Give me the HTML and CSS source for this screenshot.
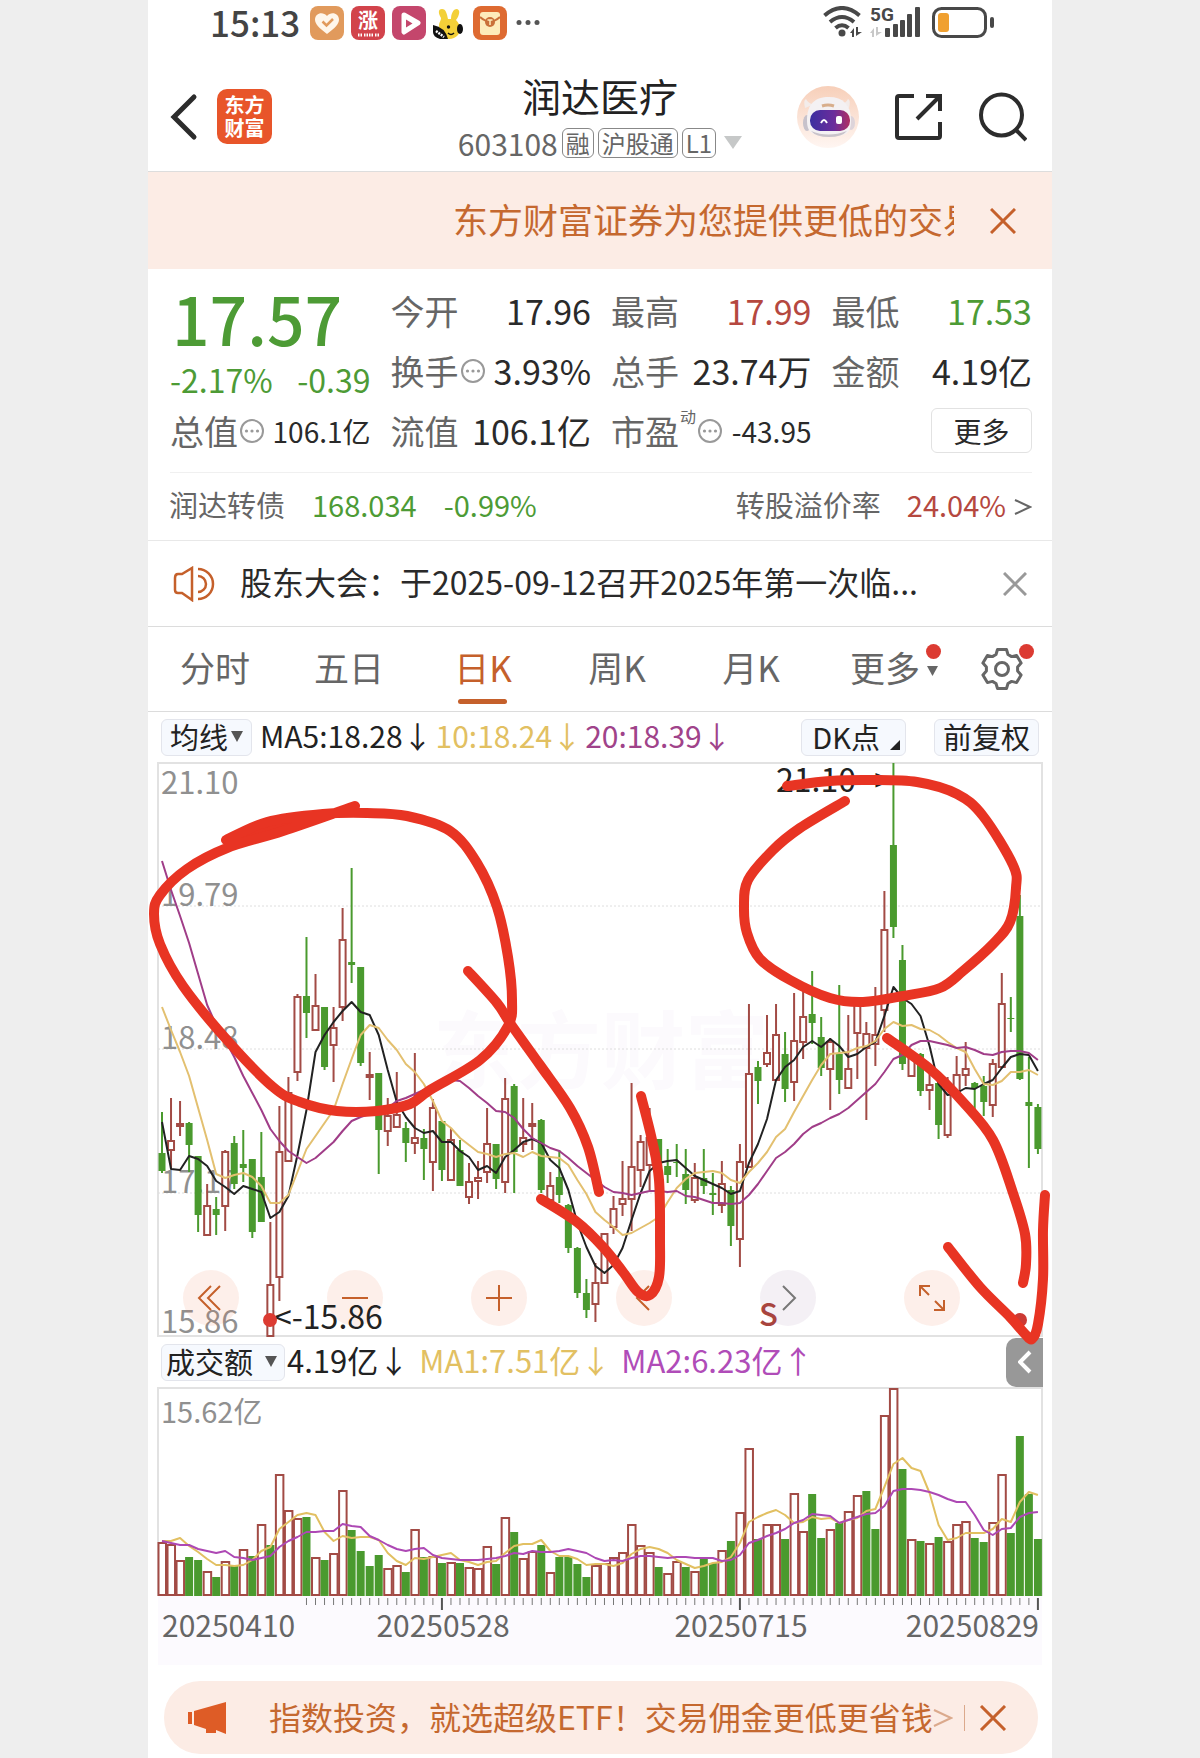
FILE: index.html
```html
<!DOCTYPE html>
<html lang="zh-CN">
<head>
<meta charset="utf-8">
<meta name="viewport" content="width=device-width, initial-scale=1">
<title>润达医疗 603108</title>
<link rel="stylesheet" href="styles.css">
</head>
<body>
<main class="phone">

  <div class="status">
    <span class="clock">15:13</span>
    <div class="apps">
      <svg width="34" height="34" viewBox="0 0 34 34" aria-hidden="true"><rect width="34" height="34" rx="8" fill="#e19a5c"/><path d="M17 28C9 22 5 18 5 13.500C5 7 13 5 17 10C21 5 29 7 29 13.500C29 18 25 22 17 28Z" fill="#fff6ea"/><path d="M12.500 15.500l4 4 6.500-6.500" fill="none" stroke="#e19a5c" stroke-width="2.500"/></svg>
      <svg width="34" height="34" viewBox="0 0 34 34" aria-hidden="true"><rect width="34" height="34" rx="8" fill="#d2434b"/><text x="17" y="22" class="app-char">涨</text><path d="M7 29h4M13 29h4M18 29h4M24 29h4" stroke="#fff" stroke-width="3" stroke-dasharray="1.500 1"/></svg>
      <svg width="34" height="34" viewBox="0 0 34 34" aria-hidden="true"><rect width="34" height="34" rx="8" fill="#c4466c"/><path d="M12 9L26 17L12 26Z" fill="#fff" stroke="#fff" stroke-width="5" stroke-linejoin="round"/><path d="M14 13.500l6.500 4-6.500 4Z" fill="#c4466c"/></svg>
      <svg width="32" height="34" viewBox="0 0 32 34" aria-hidden="true"><path d="M6 20C6 16 8 15 8 12C5 7 5 3 9 3C13 3 14 8 15 13L18 13C18 8 20 3 24 3C28 4 26 10 23 14C27 18 29 24 25 29C20 35 10 34 7 28Z" fill="#f3d038"/><path d="M0 19Q12 21 15 33H7Q0 31 0 26Z" fill="#111"/><ellipse cx="27" cy="23" rx="3" ry="5" fill="#111"/><circle cx="15.500" cy="21" r="1.700" fill="#111"/><path d="M15 27q3 3 6 0" fill="none" stroke="#111" stroke-width="1.500"/><path d="M3 25l8 6" stroke="#fff" stroke-width="2.500" stroke-dasharray="2 1"/></svg>
      <svg width="36" height="34" viewBox="0 0 36 34" aria-hidden="true"><rect x="1" width="34" height="34" rx="8" fill="#de6a31"/><rect x="8" y="6" width="20" height="23" rx="3" fill="#fdebbb"/><path d="M8 11q10 9 20 0" fill="none" stroke="#c9703a" stroke-width="2"/><circle cx="18" cy="16" r="5" fill="#c9703a"/><path d="M15.500 14h5M18 14v5" stroke="#fdebbb" stroke-width="1.500"/></svg>
      <svg width="26" height="34" viewBox="0 0 26 34" aria-hidden="true"><g fill="#555"><circle cx="4" cy="16.500" r="2.500"/><circle cx="13" cy="16.500" r="2.500"/><circle cx="22" cy="16.500" r="2.500"/></g></svg>
    </div>
    <svg class="signals" width="173" height="34" viewBox="0 0 173 34" aria-label="5G">
      <g fill="none" stroke="#484848" stroke-width="4"><path d="M1.500 9.500Q19 -5.500 36.500 9.500"/><path d="M7 16Q19 6 31 16"/><path d="M12.500 22Q19 16.500 25.500 22"/></g>
      <circle cx="19" cy="27" r="3.500" fill="#484848"/>
      <path d="M27 27l4-5v9h-2v-4zM33 21v9l6-4h-4v-5z" fill="#484848"/>
      <text x="47" y="15" class="net">5G</text>
      <path d="M47 27l4-5v9h-2v-4zM53 21v9l6-4h-4v-5z" fill="#c8c8c8"/>
      <g fill="#484848"><rect x="62" y="22" width="5" height="9" rx="1"/><rect x="70" y="18" width="5" height="13" rx="1"/><rect x="77" y="14" width="5" height="17" rx="1"/><rect x="84" y="8" width="5" height="23" rx="1"/><rect x="92" y="1" width="5" height="30" rx="1"/></g>
      <rect x="110.500" y="2.500" width="52" height="28" rx="8" fill="none" stroke="#484848" stroke-width="3"/>
      <rect x="115" y="7" width="11" height="19" rx="3" fill="#f0a030"/>
      <rect x="167" y="11" width="4" height="11" rx="2" fill="#484848"/>
    </svg>
  </div>

  <header class="header">
    <div class="header-side">
      <button class="plain" aria-label="返回"><svg width="28" height="48" viewBox="0 0 28 48"><path d="M24 4L4 24L24 44" fill="none" stroke="#2c2c2c" stroke-width="5" stroke-linecap="round"/></svg></button>
      <div class="logo">东方<br>财富</div>
    </div>
    <div class="heading">
      <h1>润达医疗</h1>
      <div class="code">603108 <span class="tag">融</span><span class="tag">沪股通</span><span class="tag">L1</span><svg class="caret" width="18" height="13" viewBox="0 0 18 13"><path d="M0 0H18L9 13Z" fill="#c6c8c8"/></svg></div>
    </div>
    <div class="header-side header-right">
      <button class="plain" aria-label="智能助手"><svg width="62" height="62" viewBox="0 0 62 62">
        <defs><linearGradient id="sky" x1="0" y1="0" x2="0" y2="1"><stop offset="0" stop-color="#f7cfb9"/><stop offset="1" stop-color="#fff6f2"/></linearGradient><linearGradient id="visor"><stop offset="0" stop-color="#3b2fa0"/><stop offset=".6" stop-color="#6b2c9c"/><stop offset="1" stop-color="#b02f62"/></linearGradient></defs>
        <circle cx="31" cy="31" r="31" fill="url(#sky)"/><path d="M8 22q-2-8 1-9q3 6 9 5zM52 22q2-8-1-9q-3 6-9 5z" fill="#f3ecea"/><ellipse cx="10" cy="37" rx="4" ry="8" fill="#c7c2cb"/><ellipse cx="54" cy="37" rx="4" ry="7" fill="#ddd4da"/><path d="M10 34C10 18 18 11 32 11S54 19 54 34S48 50 31 50S10 46 10 34Z" fill="#f4f1f3"/><path d="M14 45q17 7 36 0q-5 6-18 6t-18-6z" fill="#c9c3ca"/><path d="M25 20q6-2 12 0" fill="none" stroke="#d8ae8c" stroke-width="3"/><rect x="13" y="24" width="40" height="21" rx="10" fill="url(#visor)"/><path d="M24 37q3-6 6 0" fill="none" stroke="#fff" stroke-width="2"/><rect x="39" y="30" width="6" height="8" rx="2" fill="#fff"/></svg></button>
      <button class="plain" aria-label="分享"><svg width="48" height="48" viewBox="0 0 48 48"><path d="M19 3H4Q2 3 2 5V43Q2 45 4 45H43Q45 45 45 43V29M31 3H45V18M45 3L22 26" fill="none" stroke="#2c2c2c" stroke-width="4"/></svg></button>
      <button class="plain" aria-label="搜索"><svg width="48" height="50" viewBox="0 0 48 50"><circle cx="22.500" cy="23" r="20.500" fill="none" stroke="#2c2c2c" stroke-width="4"/><path d="M37 38L47 48" stroke="#2c2c2c" stroke-width="4"/></svg></button>
    </div>
  </header>

  <aside class="banner">
    <a class="banner-text" href="#open">东方财富证券为您提供更低的交易佣金</a>
    <button class="plain" aria-label="关闭"><svg width="26" height="26" viewBox="0 0 26 26"><path d="M1 1L25 25M25 1L1 25" stroke="#c5602b" stroke-width="3"/></svg></button>
  </aside>

  <section class="quote">
    <div class="last down">
      <div class="price">17.57</div>
      <div class="change"><span>-2.17%</span><span>-0.39</span></div>
    </div>
    <div class="cell"><span class="name">今开</span><span>17.96</span></div>
    <div class="cell"><span class="name">最高</span><span class="up">17.99</span></div>
    <div class="cell"><span class="name">最低</span><span class="down">17.53</span></div>
    <div class="cell"><span class="name">换手<svg class="more" viewBox="0 0 26 26"><use href="#dots"/></svg></span><span>3.93%</span></div>
    <div class="cell"><span class="name">总手</span><span>23.74万</span></div>
    <div class="cell"><span class="name">金额</span><span>4.19亿</span></div>
    <div class="cell"><span class="name">总值<svg class="more" viewBox="0 0 26 26"><use href="#dots"/></svg></span><span class="small">106.1亿</span></div>
    <div class="cell"><span class="name">流值</span><span>106.1亿</span></div>
    <div class="cell"><span class="name">市盈<sup>动</sup><svg class="more" viewBox="0 0 26 26"><g id="dots"><circle cx="13" cy="13" r="11" fill="none" stroke="#999" stroke-width="2"/><g fill="#999"><circle cx="7.500" cy="13" r="1.600"/><circle cx="13" cy="13" r="1.600"/><circle cx="18.500" cy="13" r="1.600"/></g></g></svg></span><span class="small">-43.95</span></div>
    <div class="cell cell-end"><button class="more-button">更多</button></div>
  </section>

  <a class="bond" href="#bond">
    <span>润达转债</span><span class="down bond-price">168.034</span><span class="down">-0.99%</span>
    <span class="bond-rate">转股溢价率</span><span class="up">24.04%</span><svg width="18" height="16" viewBox="0 0 18 16"><path d="M1 1L16 8L1 15" fill="none" stroke="#666" stroke-width="2"/></svg>
  </a>

  <div class="notice">
    <svg width="42" height="36" viewBox="0 0 42 36" aria-hidden="true"><path d="M2 12V24Q2 27 5 27H9L19 34V2L9 8H5Q2 8 2 12Z M25 3A15 15 0 0 1 25 33M25 10A8 8 0 0 1 25 26" fill="none" stroke="#c5602b" stroke-width="2.500"/></svg>
    <p>股东大会：于2025-09-12召开2025年第一次临...</p>
    <button class="plain" aria-label="关闭"><svg width="24" height="24" viewBox="0 0 24 24"><path d="M1 1L23 23M23 1L1 23" stroke="#999" stroke-width="3"/></svg></button>
  </div>

  <nav class="tabs">
    <button>分时</button>
    <button>五日</button>
    <button class="active">日K</button>
    <button>周K</button>
    <button>月K</button>
    <button><span class="badged">更多<svg class="tab-caret" width="11" height="10" viewBox="0 0 11 10"><path d="M0 0H11L5.500 10Z" fill="#666"/></svg><i class="dot"></i></span></button>
    <button class="tab-gear" aria-label="设置"><span class="badged"><svg width="44" height="44" viewBox="-22 -22 44 44"><path d="M-6 -14.500L-4.500 -19.500H4.500L6 -14.500L9.600 -12.400L14.600 -13.600L19.100 -5.900L15.600 -2.100V2.100L19.100 5.900L14.600 13.600L9.600 12.400L6 14.500L4.500 19.500H-4.500L-6 14.500L-9.600 12.400L-14.600 13.600L-19.100 5.900L-15.600 2.100V-2.100L-19.100 -5.900L-14.600 -13.600L-9.600 -12.400Z" fill="none" stroke="#666" stroke-width="3" stroke-linejoin="round"/><circle r="6.500" fill="none" stroke="#666" stroke-width="3"/></svg><i class="dot"></i></span></button>
  </nav>

  <div class="legend">
    <label class="chip"><select aria-label="主图指标"><option>均线</option></select><svg width="12" height="11" viewBox="0 0 12 11"><path d="M0 0H12L6 11Z" fill="#555"/></svg></label>
    <div class="values"><span>MA5:18.28↓</span><span class="ma10">10:18.24↓</span><span class="ma20">20:18.39↓</span></div>
    <button class="chip chip-dk">DK点<svg width="10" height="10" viewBox="0 0 10 10"><path d="M10 0V10H0Z" fill="#222"/></svg></button>
    <button class="chip">前复权</button>
  </div>

  <section class="price-panel">
    <svg class="plot" id="price" viewBox="0 0 904 576" role="img" aria-label="日K线">
      <text x="285" y="322" class="watermark">东方财富</text>
      <path d="M10 3H894V576H10Z" class="frame"/>
      <path d="M10 146H894M10 289H894M10 433H894" class="grid"/>
      <g class="axis-label"><text x="13" y="34">21.10</text><text x="13" y="146">19.79</text><text x="13" y="289">18.48</text><text x="13" y="433">17.17</text><text x="13" y="573">15.86</text></g>
    </svg>
    <div class="tools">
      <button aria-label="最左"><svg width="28" height="28" viewBox="0 0 28 28"><path d="M14 2L2 14L14 26M23 2L11 14L23 26"/></svg></button>
      <button aria-label="缩小"><svg width="28" height="28" viewBox="0 0 28 28"><path d="M1 14H27"/></svg></button>
      <button aria-label="放大"><svg width="28" height="28" viewBox="0 0 28 28"><path d="M1 14H27M14 1V27"/></svg></button>
      <button aria-label="左移"><svg width="28" height="28" viewBox="0 0 28 28"><path d="M19 2L7 14L19 26"/></svg></button>
      <button class="muted" aria-label="右移"><svg width="28" height="28" viewBox="0 0 28 28"><path d="M9 2L21 14L9 26"/></svg></button>
      <button aria-label="全屏"><svg width="28" height="28" viewBox="0 0 28 28"><path d="M2 12V2H12M2 2L11 11M26 16V26H16M26 26L17 17"/></svg></button>
    </div>
    <svg class="plot overlay" id="ink" viewBox="0 0 904 576" aria-hidden="true">
      <g class="mark"><text x="628" y="32">21.10 -&gt;</text><text x="126" y="569">&lt;-15.86</text></g>
      <text x="611" y="566" class="sell">S</text>
      <circle cx="122" cy="560" r="7" fill="#dc3b32"/><circle cx="872" cy="560" r="7" fill="#cc3a34"/>
      <path d="M78 80L119 60L175 54L207 46L135 71L79 88Z" fill="#e83423"/>
    </svg>
  </section>

  <div class="legend legend-volume">
    <label class="chip"><select aria-label="副图指标"><option>成交额</option></select><svg width="12" height="11" viewBox="0 0 12 11"><path d="M0 0H12L6 11Z" fill="#555"/></svg></label>
    <div class="values"><span>4.19亿↓</span><span class="vma1">MA1:7.51亿↓</span><span class="vma2">MA2:6.23亿↑</span></div>
    <button class="collapse" aria-label="展开"><svg width="14" height="24" viewBox="0 0 14 24"><path d="M12 2L2 12L12 22" fill="none" stroke="#fff" stroke-width="4"/></svg></button>
  </div>

  <svg class="plot" id="volume" viewBox="0 0 904 277" role="img" aria-label="成交额">
    <rect x="10" y="208" width="884" height="69" fill="#fcfafe"/>
    <path d="M10 208V0H894V208" class="frame"/>
    <g class="date"><text x="14" y="249">20250410</text><text x="295" y="249" text-anchor="middle">20250528</text><text x="593" y="249" text-anchor="middle">20250715</text><text x="891" y="249" text-anchor="end">20250829</text></g>
    <text x="13" y="35" class="axis-label axis-volume">15.62亿</text>
  </svg>

  <footer class="footer">
    <div class="promo">
      <svg width="40" height="34" viewBox="0 0 40 34" aria-hidden="true"><path d="M0 11H4V23H0ZM6 10L38 1V33L28 29V32H18V28L6 24Z" fill="#de5c26"/></svg>
      <a href="#etf">指数投资，就选超级ETF！交易佣金更低更省钱</a>
      <svg width="20" height="18" viewBox="0 0 20 18" aria-hidden="true"><path d="M1 1L18 9L1 17" fill="none" stroke="#dba98c" stroke-width="2"/></svg>
      <button class="plain promo-close" aria-label="关闭"><svg width="28" height="26" viewBox="0 0 28 26"><path d="M2 1L26 25M26 1L2 25" stroke="#c5602b" stroke-width="3"/></svg></button>
    </div>
  </footer>
</main>
<script src="chart.js"></script>
</body>
</html>
```
FILE: styles.css
```css
* { box-sizing: border-box; }
body {
  margin: 0;
  background: #eeeeee;
  color: #2a2a2a;
  font-family: "Noto Sans CJK SC", "Noto Sans", sans-serif;
  font-size: 30px;
}
button, select { font: inherit; color: inherit; margin: 0; padding: 0; border: 0; background: none; }
button { cursor: pointer; }
a { color: inherit; text-decoration: none; }
svg { display: block; flex: none; }
.plain { display: block; flex: none; }
.up { color: #b5483f; }
.down { color: #4d9b35; }
.phone { width: 100%; max-width: 904px; margin: 0 auto; background: #fff; }

.status { display: flex; align-items: flex-start; height: 62px; padding: 6px 56px 0 62px; }
.clock { width: 100px; font-size: 35px; line-height: 32px; font-weight: 500; color: #444; }
.apps { display: flex; gap: 7px; }
.app-char { font-size: 20px; font-weight: 700; fill: #fff; text-anchor: middle; }
.signals { margin-left: auto; }
.net { font-family: "Roboto", sans-serif; font-size: 19px; font-weight: 700; fill: #484848; }

.header { display: grid; grid-template-columns: 1fr auto 1fr; align-items: center; height: 110px; padding: 0 25px 0 22px; border-bottom: 1px solid #ddd; }
.header-side { display: flex; align-items: center; gap: 19px; }
.header-right { justify-content: flex-end; gap: 36px; }
.logo { width: 55px; height: 55px; padding: 4px 0; border-radius: 10px; background: #e8552a; color: #fff; font-size: 20px; font-weight: 700; line-height: 23px; text-align: center; }
.heading { padding-left: 3px; text-align: center; }
h1 { margin: 0; padding-bottom: 4px; font-size: 39px; font-weight: 400; line-height: 48px; color: #222; }
.code { display: flex; align-items: center; gap: 4px; height: 40px; color: #666; }
.tag { height: 30px; padding: 0 3px; border: 1px solid #888; border-radius: 6px; font-size: 24px; line-height: 27px; }
.caret { margin-left: 4px; }

.banner { display: flex; align-items: center; justify-content: flex-end; gap: 36px; height: 97px; padding: 0 36px 0 305px; background: #fcece5; color: #c5682f; }
.banner-text { flex: 1; overflow: hidden; padding-bottom: 3px; white-space: nowrap; font-size: 35px; line-height: 52px; }

.quote { display: grid; grid-template-columns: repeat(4, 1fr); grid-auto-rows: 60px; column-gap: 20px; margin: 0 20px 0 22px; padding: 12px 0 11px; border-bottom: 1px solid #f0f0f0; }
.last { grid-row: span 2; }
.price { padding-left: 2px; height: 77px; font-size: 66px; line-height: 72px; font-weight: 500; }
.change { display: flex; justify-content: space-between; font-size: 32px; line-height: 42px; }
.cell { display: flex; align-items: center; justify-content: space-between; padding-bottom: 1px; white-space: nowrap; font-size: 34px; line-height: 50px; }
.cell-end { justify-content: flex-end; }
.name { display: flex; align-items: center; color: #666; }
.more { width: 26px; height: 26px; margin-left: 1px; }
sup { align-self: flex-start; margin-left: 1px; font-size: 16px; line-height: 20px; }
.small { font-size: 28px; }
.more-button { width: 101px; height: 45px; border: 1px solid #e2e2e2; border-radius: 6px; font-size: 28px; line-height: 40px; }

.bond { display: flex; align-items: center; height: 68px; padding: 0 20px 0 21px; border-bottom: 1px solid #e8e8e8; color: #666; font-size: 29px; }
.bond span { padding-bottom: 5px; }
.bond-price { margin: 0 27px; }
.bond-rate { margin: 0 26px 0 auto; }
.bond svg { margin-left: 8px; }

.notice { display: flex; align-items: center; height: 86px; padding: 0 25px; border-bottom: 1px solid #dcdcdc; font-size: 32px; }
.notice p { flex: 1; margin: 0 0 0 25px; padding-bottom: 5px; white-space: nowrap; }

.tabs { display: flex; height: 85px; border-bottom: 1px solid #dcdcdc; color: #666; font-size: 35px; }
.tabs button { position: relative; flex: 134; padding-bottom: 4px; line-height: 50px; }
.tabs .tab-gear { flex: 100; padding-bottom: 0; }
.tabs .active { color: #c5602b; }
.active::after { content: ""; position: absolute; left: 50%; bottom: 7px; width: 49px; height: 5px; margin-left: -25px; border-radius: 3px; background: #c5602b; }
.badged { position: relative; display: block; width: max-content; margin: 0 auto; }
.tab-caret { position: absolute; left: 77px; top: 24px; }
.dot { position: absolute; right: -21px; top: 2px; width: 15px; height: 15px; border-radius: 50%; background: #dc3b32; }
.tab-gear .dot { right: -10px; top: -3px; }

.legend { display: flex; align-items: center; height: 48px; padding: 2px 13px 0 13px; line-height: 36px; color: #222; }
.chip { display: flex; align-items: center; gap: 2px; height: 37px; padding: 0 8px 2px; border: 1px solid #e3e5ec; border-radius: 6px; background: #f6f9fe; font-size: 29px; line-height: 32px; }
.chip select { appearance: none; height: 34px; outline: none; }
.values { display: flex; flex: 1; gap: 3px; margin-left: 8px; padding-bottom: 4px; white-space: nowrap; }
.chip-dk { align-items: center; gap: 10px; margin-right: 28px; padding: 0 5px 2px 10px; }
.chip-dk svg { align-self: flex-end; margin-bottom: 3px; }
.ma10, .vma1 { color: #e2c062; }
.ma20 { color: #a0438a; }
.vma2 { color: #b04cb8; }
.legend-volume { height: 52px; padding: 0 9px 0 13px; font-size: 31px; }
.legend-volume .chip { gap: 11px; padding: 0 7px 2px 4px; }
.legend-volume .values { gap: 10px; margin-left: 2px; }
.collapse { display: flex; align-items: center; justify-content: center; width: 37px; height: 49px; border-radius: 10px 0 0 10px; background: #989898; }

.price-panel { position: relative; z-index: 1; }
.plot { width: 100%; height: auto; overflow: visible; }
.overlay { position: absolute; inset: 0; pointer-events: none; }
.tools { position: absolute; left: 35px; right: 92px; bottom: 10px; display: flex; justify-content: space-between; }
.tools button { display: flex; align-items: center; justify-content: center; width: 56px; height: 56px; border-radius: 50%; background: rgba(238, 110, 60, 0.11); }
.tools path { fill: none; stroke: #c5602b; stroke-width: 2; }
.tools .muted { background: rgba(110, 70, 130, 0.08); }
.tools .muted path { stroke: #777; }

.frame { fill: none; stroke: #e2e2e2; stroke-width: 2; }
.grid { stroke: #dedede; stroke-dasharray: 2 2; }
.watermark { font-size: 84px; font-weight: 700; fill: #fcfafd; }
.axis-label { font-size: 31px; fill: #909090; }
.axis-volume { font-size: 29px; }
.mark { font-size: 32px; fill: #222; }
.sell { font-size: 31px; font-weight: 500; fill: #a8443e; }
.date { font-size: 30px; fill: #666; }
.rise { fill: #fff; stroke: #a24b45; stroke-width: 2; }
.fall { fill: #4a9a2e; }
.wick-rise { stroke: #a24b45; stroke-width: 2; }
.wick-fall { stroke: #4a9a2e; stroke-width: 2; }
.line { fill: none; stroke-width: 2; stroke-linejoin: round; }
.tick { stroke: #777; stroke-width: 1; }
.tick-major { stroke: #555; stroke-width: 2; }
.pen { fill: none; stroke: #e83423; stroke-width: 10; stroke-linecap: round; stroke-linejoin: round; }

.footer { padding: 16px 14px 4px 16px; }
.promo { display: flex; align-items: center; height: 73px; padding: 0 31px 0 24px; border-radius: 36px; background: #fcece5; color: #c5682f; font-size: 32px; white-space: nowrap; }
.promo a { margin: 0 0 0 41px; padding-bottom: 4px; }
.promo-close { margin-left: auto; padding-left: 14px; border-left: 1px solid #dba98c; }
```
FILE: chart.js
```js
const NS = "http://www.w3.org/2000/svg";
const STEP = 9.03;
const xAt = (i) => 14 + STEP * i;

function add(parent, name, attrs) {
  const el = document.createElementNS(NS, name);
  for (const key in attrs) el.setAttribute(key, attrs[key]);
  parent.appendChild(el);
  return el;
}

// Each candle: direction, high, low, body top, body bottom
const candles = `g352,413,393,411 r338,408,381,390 r341,376,364,366 g362,412,363,385 g396,472,396,455 r424,475,446,475
g437,475,449,455 r390,471,392,446 g376,429,383,424 g370,422,404,408 g399,478,399,472 g372,462,417,462
r462,577,525,576 r346,541,392,517 r317,401,333,401 r234,321,237,312 g177,278,236,253 r214,270,246,270
g247,310,247,307 r247,322,268,285 r148,261,180,247 g108,223,202,205 g207,306,207,303 r292,340,315,317
g313,414,313,370 r338,386,356,371 r312,367,355,367 g362,402,368,383 r293,394,378,383 g369,420,378,389
r339,431,348,402 g361,421,361,410 r368,420,380,420 g380,426,390,426 r403,444,422,437 r401,439,418,421
r348,423,384,412 g384,429,384,419 r318,433,339,422 g324,433,326,392 r338,392,378,384 r343,390,364,366
g359,433,360,430 r412,440,426,440 g390,443,417,435 g444,493,445,488 g487,538,488,533 g519,558,533,550
r503,562,523,544 r473,523,474,523 r436,474,449,467 r401,456,439,444 r323,471,407,439 r375,427,382,410
r348,430,378,405 g379,410,379,407 g389,423,406,415 g384,417,402,403 g389,444,414,430 r403,443,418,440
g389,434,418,426 g413,455,433,435 r401,453,424,445 g426,486,430,466 r384,507,402,479 r244,407,314,407
g301,344,307,321 r255,307,293,304 r244,320,275,320 g272,342,294,329 r233,341,281,322 r231,299,257,282
g211,284,254,263 g257,316,277,308 r278,350,282,309 g225,334,294,320 r255,328,309,328 r240,319,243,273
r262,360,274,288 r227,306,275,284 r131,272,170,250 g3,178,85,167 g185,310,200,304 r297,316,297,316
g293,336,294,331 r312,350,325,330 g320,379,323,365 r317,378,324,375 r296,335,315,333 r282,326,309,315
g322,352,323,328 g316,356,326,342 r299,357,304,345 r213,308,244,307 g237,272,258,259 g135,320,156,319
g297,408,342,346 g344,394,347,389`.split(/\s+/);

const averages = {
  "#222222": [362,409,410,396,399,406,421,427,434,426,429,432,458,452,436,395,350,292,275,262,251,242,252,255,275,310,342,357,368,373,371,382,382,391,397,410,406,413,397,390,382,379,383,400,408,430,463,487,506,513,505,488,460,433,411,403,401,400,408,416,420,424,428,434,431,403,384,359,320,307,300,287,281,287,279,286,297,294,287,282,256,227,238,244,256,286,324,335,333,328,329,324,320,308,297,294,295,311],
  "#e3c070": [247,270,292,316,348,380,414,418,415,413,417,426,443,443,435,412,389,376,363,350,324,299,275,265,268,280,290,304,312,324,341,361,368,378,385,392,394,397,394,393,397,392,396,397,398,405,420,434,452,460,467,475,473,468,463,457,442,428,419,413,412,411,413,420,423,412,403,392,377,369,352,336,320,305,294,293,292,288,286,281,269,262,266,265,269,270,275,282,288,292,309,324,325,321,312,312,310,315],
  "#a03d88": [101,130,156,183,214,245,265,280,297,316,333,350,369,381,391,397,403,398,390,382,371,361,357,354,352,348,341,338,334,330,326,322,320,321,328,336,343,351,352,358,369,378,383,388,391,398,406,413,420,427,432,433,435,433,431,431,432,431,436,437,440,443,443,444,443,435,424,411,398,392,384,374,367,363,358,354,348,340,332,324,312,299,295,285,281,281,283,285,288,287,290,294,295,292,291,291,293,300]
};

const volumes = `r54 r52 r36 g39 g36 r25 g19 r35 g31 r47 g40 r72 g51 r122 r86 r78 g79 r39 g36 r43 r106 g66 g45 g30 g41
r28 r31 g24 r67 g39 r40 g33 r34 g33 r29 r28 r50 g32 r79 g64 r38 r45 g51 r24 g39 g39 g32 g19 r31 r33
r39 r44 r72 r51 r44 g29 r23 r35 g29 r25 g38 g33 r46 g55 r84 r148 g57 r72 r72 g57 r103 r65 g102 g58 r67
g73 r85 r101 g105 g67 r181 r208 g127 r57 g55 r53 g59 r55 r72 r75 g58 g54 r74 r122 g63 g160 g102 g57`.split(/\s+/);

const volumeAverages = {
  "#e2c062": [153,153,150,158,164,171,177,177,178,177,172,163,159,141,134,127,125,127,144,153,148,150,149,149,152,165,173,177,170,171,169,167,165,172,174,177,174,173,165,158,156,156,152,163,168,168,171,177,176,176,178,175,166,161,159,161,165,172,176,180,178,175,174,169,155,134,129,125,122,127,135,134,129,131,130,135,132,130,123,121,99,76,70,80,83,105,137,152,150,145,145,145,141,131,134,114,104,107],
  "#ad48b4": [153,155,157,157,161,163,165,163,169,170,172,170,168,159,153,149,144,144,143,143,136,138,139,148,152,157,161,163,161,160,167,170,171,172,172,172,171,170,168,165,166,163,164,164,163,161,163,165,170,173,172,173,170,168,168,169,170,169,169,170,170,170,173,172,167,155,152,148,145,141,135,132,126,127,128,135,132,129,126,125,118,103,101,101,102,104,107,111,114,114,127,142,147,141,140,129,125,124]
};

// Hand-drawn notes on top of the chart
const strokes = [
  [78,80,119,62,175,54,219,53,259,56,302,71,329,103,349,147,360,197,364,240,360,266,332,300,282,330,262,344,229,351,189,351,152,342,125,327,79,280,35,226,12,184,6,154,12,135,39,109,79,88,135,71,207,46],
  [320,211,349,243,362,263,392,305,422,348,440,387,451,432],
  [393,439,429,462,455,487,475,512,490,532,502,535,511,517,512,480,511,420,504,380,493,336],
  [639,26,682,21,722,20,769,22,809,34,835,56,865,105,868,128,862,162,845,184,815,211,792,228,755,236,715,242,682,238,642,220,612,199,599,173,596,147,600,120,625,90,652,68,697,41],
  [739,278,782,309,815,342,845,380,865,433,877,474,878,504,875,523],
  [800,487,832,527,862,557,877,574,884,579,890,564,895,519,895,470,897,435]
];

function drawLine(svg, values, color) {
  add(svg, "polyline", { class: "line", stroke: color, points: values.map((y, i) => xAt(i) + "," + y).join(" ") });
}

function smooth(flat) {
  const p = [];
  for (let i = 0; i < flat.length; i += 2) p.push([flat[i], flat[i + 1]]);
  let d = "M" + p[0];
  for (let i = 0; i < p.length - 1; i++) {
    const a = p[i - 1] || p[i], b = p[i], c = p[i + 1], e = p[i + 2] || c;
    d += "C" + [b[0] + (c[0] - a[0]) / 6, b[1] + (c[1] - a[1]) / 6, c[0] - (e[0] - b[0]) / 6, c[1] - (e[1] - b[1]) / 6, c[0], c[1]];
  }
  return d;
}

const price = document.getElementById("price");
candles.forEach((item, i) => {
  const [high, low, top, bottom] = item.slice(1).split(",").map(Number);
  const x = xAt(i);
  if (item[0] === "r") {
    add(price, "path", { class: "wick-rise", d: `M${x} ${high}V${top}M${x} ${bottom}V${low}` });
    add(price, "rect", { class: "rise", x: x - 3, y: top, width: 6, height: bottom - top });
  } else {
    add(price, "path", { class: "wick-fall", d: `M${x} ${high}V${low}` });
    add(price, "rect", { class: "fall", x: x - 3.5, y: top, width: 7, height: bottom - top });
  }
});
for (const color in averages) drawLine(price, averages[color], color);

const volume = document.getElementById("volume");
volumes.forEach((item, i) => {
  const h = Number(item.slice(1));
  const x = xAt(i);
  if (item[0] === "r") add(volume, "rect", { class: "rise", x: x - 3.5, y: 209 - h, width: 7.5, height: h - 2 });
  else add(volume, "rect", { class: "fall", x: x - 4, y: 208 - h, width: 8, height: h });
  if (i > 15) {
    const major = i === 31 || i === 64 || i === 97;
    add(volume, "path", { class: major ? "tick-major" : "tick", d: `M${x} 210V${major ? 222 : 217}` });
  }
});
for (const color in volumeAverages) drawLine(volume, volumeAverages[color], color);

const ink = document.getElementById("ink");
strokes.forEach((points) => add(ink, "path", { class: "pen", d: smooth(points) }));
```
